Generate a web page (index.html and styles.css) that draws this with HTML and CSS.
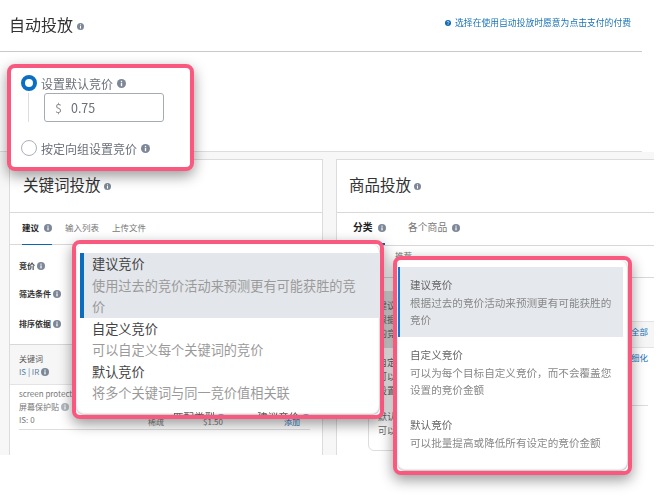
FILE: index.html
```html
<!DOCTYPE html>
<html lang="zh-CN">
<head>
    <meta charset="UTF-8">
    <meta name="viewport" content="width=device-width, initial-scale=1.0">
    <title>自动投放</title>
    <link rel="stylesheet" href="styles.css">
</head>
<body>
    <svg class="defs" width="0" height="0">
        <symbol id="info" viewBox="0 0 16 16">
            <circle cx="8" cy="8" r="8" fill="currentColor"/>
            <rect x="6.8" y="6.8" width="2.4" height="6" fill="#fff"/>
            <rect x="6.8" y="3.2" width="2.4" height="2.3" fill="#fff"/>
        </symbol>
    </svg>

    <div class="page">
        <div class="head">
            <h1 class="title">自动投放 <svg class="info info-lg"><use href="#info"/></svg></h1>
            <a class="help-link">
                <svg class="help-icon" viewBox="0 0 16 16">
                    <circle cx="8" cy="8" r="8" fill="currentColor"/>
                    <path d="M5.4 6.2a2.6 2.6 0 1 1 3.9 2.2c-.9.5-1.3.9-1.3 1.9" fill="none" stroke="#fff" stroke-width="1.8"/>
                    <rect x="7" y="11.4" width="2" height="2" fill="#fff"/>
                </svg>
                选择在使用自动投放时愿意为点击支付的付费
            </a>
        </div>

        <div class="bid-choice"></div>

        <div class="panels">
            <section class="panel panel-left">
                <h2 class="panel-title">关键词投放 <svg class="info info-lg"><use href="#info"/></svg></h2>
                <div class="tabs">
                    <span class="tab active">建议 <svg class="info info-tab"><use href="#info"/></svg></span>
                    <span class="tab">输入列表</span>
                    <span class="tab">上传文件</span>
                </div>
                <div class="form-rows">
                    <div class="form-row row-bid">竞价 <svg class="info"><use href="#info"/></svg></div>
                    <div class="form-row row-filter">筛选条件 <svg class="info"><use href="#info"/></svg></div>
                    <div class="form-row row-sort">排序依据 <svg class="info"><use href="#info"/></svg></div>
                </div>
                <div class="table-head">
                    <div>关键词</div>
                    <div class="sub-blue">IS | IR <svg class="info"><use href="#info"/></svg></div>
                </div>
                <div class="table-row">
                    <div>screen protector</div>
                    <div>屏幕保护贴 <svg class="info info-pale"><use href="#info"/></svg></div>
                    <div>IS: 0</div>
                    <div class="cell-match">稀疏</div>
                    <div class="cell-price">$1.50</div>
                    <a class="cell-add">添加</a>
                </div>
            </section>

            <section class="panel panel-right">
                <h2 class="panel-title">商品投放 <svg class="info info-lg"><use href="#info"/></svg></h2>
                <div class="tabs tabs-right">
                    <span class="tab active">分类 <svg class="info info-tab"><use href="#info"/></svg></span>
                    <span class="tab">各个商品 <svg class="info info-tab"><use href="#info"/></svg></span>
                </div>
                <div class="right-sub">推荐</div>
                <div class="right-table">
                    <a class="right-all">全部</a>
                </div>
                <a class="right-refine">细化</a>
                <div class="right-rule"></div>

                <!-- 下拉菜单 (被标注框盖住一部分) -->
                <div class="under-menu">
                    <div class="under-selected">建议竞价<br>根据过去<br>的竞价</div>
                    <div class="under-item">自定义<br>可以为<br>设置的</div>
                    <div class="under-item">默认竞价<br>可以批</div>
                </div>
            </section>
        </div>
    </div>

    <!-- 粉色标注框 -->
    <div class="callout callout-radio">
        <label class="radio-line">
            <span class="radio checked"></span>设置默认竞价 <svg class="info info-mid"><use href="#info"/></svg>
        </label>
        <div class="bid-input-wrap">
            <div class="bid-input"><span class="dollar">$</span><span>0.75</span></div>
        </div>
        <label class="radio-line">
            <span class="radio"></span>按定向组设置竞价 <svg class="info info-mid"><use href="#info"/></svg>
        </label>
    </div>

    <div class="callout callout-menu">
        <div class="menu-card">
            <div class="menu-item selected">
                <div class="menu-name">建议竞价</div>
                <div class="menu-desc">使用过去的竞价活动来预测更有可能获胜的竞价</div>
            </div>
            <div class="menu-item">
                <div class="menu-name">自定义竞价</div>
                <div class="menu-desc">可以自定义每个关键词的竞价</div>
            </div>
            <div class="menu-item">
                <div class="menu-name">默认竞价</div>
                <div class="menu-desc">将多个关键词与同一竞价值相关联</div>
            </div>
            <div class="menu-peek">
                <span>匹配类型 <svg class="info"><use href="#info"/></svg></span>
                <span>建议竞价 <svg class="info"><use href="#info"/></svg></span>
            </div>
        </div>
    </div>

    <div class="callout callout-menu-sm">
        <div class="menu-card">
            <div class="menu-item selected">
                <div class="menu-name">建议竞价</div>
                <div class="menu-desc">根据过去的竞价活动来预测更有可能获胜的竞价</div>
            </div>
            <div class="menu-item">
                <div class="menu-name">自定义竞价</div>
                <div class="menu-desc">可以为每个目标自定义竞价，而不会覆盖您设置的竞价金额</div>
            </div>
            <div class="menu-item">
                <div class="menu-name">默认竞价</div>
                <div class="menu-desc">可以批量提高或降低所有设定的竞价金额</div>
            </div>
        </div>
    </div>
</body>
</html>
```

FILE: styles.css
```css
* {
    margin: 0;
    padding: 0;
    box-sizing: border-box;
}

body {
    background: #fff;
    font-family: "Noto Sans CJK SC", "Noto Sans", sans-serif;
    color: #333;
    width: 663px;
    height: 499px;
    position: relative;
    overflow: hidden;
    filter: blur(0.4px);
}

.defs {
    position: absolute;
}

.page {
    width: 654px;
    height: 455px;
    overflow: hidden;
}

.info {
    width: 8px;
    height: 8px;
    color: #7c8798;
    vertical-align: -1px;
}

.info-lg {
    width: 7px;
    height: 7px;
    vertical-align: 1px;
}

.info-tab {
    width: 8px;
    height: 8px;
    margin-left: 3px;
}

.info-mid {
    width: 9px;
    height: 9px;
    margin-left: 1px;
    vertical-align: -1px;
}

.info-pale {
    color: #b4b9c0;
}

/* 顶部 */
.head {
    width: 642px;
    height: 52px;
    border-bottom: 1px solid #c9c9c9;
    padding: 0 11px 0 9px;
    display: flex;
    justify-content: space-between;
    align-items: center;
}

.title {
    font-size: 16px;
    font-weight: 400;
    color: #333;
    padding-bottom: 3px;
}

.help-link {
    font-size: 8.8px;
    color: #1a73b8;
    display: flex;
    align-items: center;
    gap: 4px;
    padding-bottom: 6px;
}

.help-icon {
    width: 6px;
    height: 6px;
    color: #0b66b2;
}

.bid-choice {
    width: 642px;
    height: 100px;
    border-bottom: 1px solid #ddd;
}

/* 两个面板 */
.panels {
    height: 303px;
    background: #f7f7f7;
    padding: 7px 0 0 9px;
    display: flex;
    gap: 13px;
}

.panel {
    background: #fff;
    border: 1px solid #dcdcdc;
    height: 320px;
    position: relative;
}

.panel-left {
    width: 314px;
    flex: none;
}

.panel-right {
    flex: 1;
    min-width: 0;
    border-right: none;
}

.panel-title {
    height: 53px;
    border-bottom: 1px solid #d8d8d8;
    padding: 13px 0 0 13px;
    font-size: 15.5px;
    font-weight: 400;
    color: #333;
}

.panel-right .panel-title {
    padding-left: 12px;
}

.tabs {
    height: 32px;
    border-bottom: 1px solid #d8d8d8;
    display: flex;
    gap: 13px;
    padding: 7px 0 0 12px;
    font-size: 8.5px;
    color: #777;
}

.tab {
    height: 25px;
    line-height: 15px;
}

.tab.active {
    color: #222;
    font-weight: 700;
    border-bottom: 1px solid #0b66b2;
    width: 30px;
    white-space: nowrap;
}

.tabs-right {
    gap: 23px;
    padding-left: 16px;
    font-size: 9.8px;
    height: 33px;
}

.tabs-right .tab.active {
    width: 32px;
    border-bottom-width: 2px;
}

.form-rows {
    height: 100px;
    border-bottom: 1px solid #d8d8d8;
    padding-left: 9px;
    font-size: 8px;
    font-weight: 700;
    color: #333;
}

.row-bid {
    padding-top: 15px;
}

.row-filter {
    padding-top: 17px;
}

.row-sort {
    padding-top: 19px;
}

.table-head {
    height: 40px;
    background: #f6f6f6;
    border-bottom: 1px solid #e3e3e3;
    padding: 7px 0 0 9px;
    font-size: 8px;
    line-height: 13px;
    color: #555;
}

.sub-blue {
    color: #5a7fa0;
}

.table-row {
    width: 291px;
    margin-left: 9px;
    height: 45px;
    border-bottom: 1px solid #ddd;
    padding-top: 2px;
    font-size: 8px;
    line-height: 13px;
    color: #777;
    position: relative;
}

.cell-match,
.cell-price,
.cell-add {
    position: absolute;
    top: 30px;
}

.cell-match {
    left: 129px;
}

.cell-price {
    left: 184px;
}

.cell-add {
    left: 265px;
    color: #1a73b8;
}

.right-sub {
    height: 32px;
    border-bottom: 1px solid #d8d8d8;
    padding: 3px 0 0 58px;
    font-size: 8.5px;
    color: #777;
}

.right-table {
    margin-top: 43px;
    height: 27px;
    border-top: 1px solid #e3e3e3;
    border-bottom: 1px solid #e3e3e3;
    background: #f6f6f6;
    font-size: 8.5px;
    color: #1a73b8;
    text-align: right;
    padding: 3px 6px 0 0;
}

.right-refine {
    display: block;
    text-align: right;
    padding: 3px 6px 0 0;
    font-size: 8.5px;
    color: #1a73b8;
}

.right-rule {
    margin-top: 42px;
    width: 311px;
    border-top: 1px solid #ddd;
}

/* 右面板被盖住的下拉 */
.under-menu {
    position: absolute;
    left: 31px;
    top: 131px;
    width: 120px;
    height: 160px;
    background: #fff;
    border: 1px solid #ddd;
    border-radius: 6px;
    font-size: 9px;
    line-height: 14px;
    color: #666;
    overflow: hidden;
}

.under-selected {
    height: 56px;
    background: #ddd;
    padding: 7px 0 0 9px;
}

.under-item {
    padding: 8px 0 4px 9px;
}

/* 标注框 */
.callout {
    position: absolute;
    background: #fff;
    border: 4px solid #f9587f;
    border-radius: 8px;
    box-shadow: 0 5px 14px rgba(0, 0, 0, 0.4);
}

.callout-radio {
    left: 7px;
    top: 64px;
    width: 187px;
    height: 107px;
    padding: 7px 0 0 10px;
    font-size: 12px;
    color: #6a6f78;
}

.radio-line {
    display: flex;
    align-items: center;
    gap: 4px;
    height: 16px;
}

.radio-line .info-mid {
    margin-left: 0;
}

.radio {
    width: 16px;
    height: 16px;
    border: 1px solid #aab0ba;
    border-radius: 50%;
    flex: none;
}

.radio.checked {
    border: 4.5px solid #0a6fc2;
}

.bid-input-wrap {
    margin: 2px 0 18px 7px;
    padding-left: 15px;
    border-left: 1px solid #ddd;
    height: 29px;
}

.bid-input {
    width: 120px;
    height: 29px;
    border: 1px solid #a5abb5;
    border-radius: 3px;
    padding-left: 10px;
    display: flex;
    align-items: center;
    gap: 9px;
    font-size: 12.5px;
    color: #6a6f78;
}

.dollar {
    color: #8b8f96;
}

.menu-card {
    background: #fff;
    height: 100%;
    border-radius: 8px;
    overflow: hidden;
    position: relative;
    box-shadow: inset 0 -1px 2px rgba(0, 0, 0, 0.25), inset -1px 0 1px rgba(0, 0, 0, 0.08);
}

.callout-menu {
    left: 72px;
    top: 240px;
    width: 312px;
    height: 179px;
}

.callout-menu .menu-card {
    padding-top: 9px;
}

.callout-menu .menu-item {
    padding: 0 20px 0 12px;
    margin-left: 4px;
    line-height: 21.5px;
    font-size: 13.2px;
}

.callout-menu .menu-item.selected {
    background: #e3e6ea;
    border-left: 4px solid #0b6cbd;
    padding-left: 8px;
}

.menu-name {
    color: #444;
}

.menu-desc {
    color: #9a9a9a;
}

.menu-peek {
    position: absolute;
    left: 97px;
    top: 166px;
    display: flex;
    gap: 32px;
    font-size: 10.5px;
    line-height: 14px;
    color: #555;
}

.callout-menu-sm {
    left: 393px;
    top: 256px;
    width: 239px;
    height: 219px;
}

.callout-menu-sm .menu-card {
    padding-top: 7px;
}

.callout-menu-sm .menu-item {
    height: 70px;
    padding: 9px 8px 0 12px;
    margin-left: 1px;
    margin-right: 5px;
    line-height: 17.5px;
    font-size: 10.6px;
}

.callout-menu-sm .menu-item.selected {
    background: #e5e8ec;
    border-left: 2px solid #0b7ad6;
    padding-left: 10px;
}

.callout-menu-sm .menu-name {
    color: #666;
}

.callout-menu-sm .menu-desc {
    color: #888;
}
```
